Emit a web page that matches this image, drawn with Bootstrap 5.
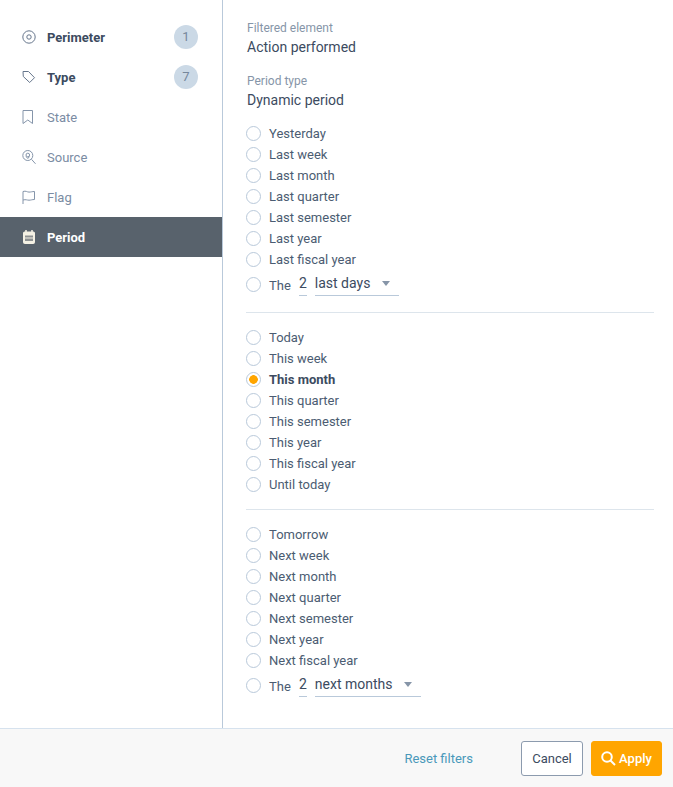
<!DOCTYPE html>
<html lang="en">
<head>
<meta charset="utf-8">
<title>Filters</title>
<link rel="stylesheet" href="https://cdn.jsdelivr.net/npm/bootstrap@5.3.0/dist/css/bootstrap.min.css">
<style>
html,body{height:787px;overflow:hidden}
body{font-family:Roboto,"Liberation Sans",sans-serif;font-size:13px;color:#3c4b5f;background:#fff}
.shell{height:787px}
.upper{height:728px;min-height:0}
.side{width:223px;flex:none;border-right:1px solid #b9c9da;padding-top:17px}
.side-item{height:40px;padding:0 24px 0 22px;color:#7b8ca3;gap:10px}
.side-item>span:not(.count){padding-top:1px}
.side-item svg{width:15px;height:16px;flex:none;fill:none;stroke:#8595aa;stroke-width:1}
.side-item.on{color:#3c4b5f;font-weight:700}
.side-item.on svg{stroke:#66768c}
.side-item.cur{background:#58626c;color:#fff;font-weight:700}
.count{width:24px;height:24px;border-radius:50%;background:#cbd9e6;color:#76879b;font-weight:400;font-size:13px}
.main{padding:21px 19px 0 23px;min-width:0}
.cap{font-size:12px;color:#8695a8;line-height:14px;margin-left:1px}
.val{font-size:14px;line-height:18px;margin-top:3px;margin-left:1px;color:#3c4b5f}
.block{margin-bottom:18px}
.block.last{margin-bottom:14px}
.opt{min-height:0;height:21px;margin:0;padding:0;gap:8px}
.opt .form-check-input{width:15px;height:15px;margin:0;float:none;flex:none;border:1px solid #b9c9da;background-image:none;background-color:#fff}
.opt .form-check-input:checked{border-color:#b9c9da;background:#fff radial-gradient(circle,#ffa500 0,#ffa500 4px,transparent 4.6px)}
.opt label{color:#4b5c72;line-height:21px}
.opt.sel label{font-weight:700;color:#3c4b5f}
.opt.inl{height:29px;align-items:center}
.opt.inl label{margin-top:1px}
.num{font-size:14px;color:#3c4b5f;border-bottom:1px solid #b9c9da;width:8px;box-sizing:content-box;line-height:20px;padding-bottom:2px;text-align:center}
.pick{font-size:14px;color:#3c4b5f;border-bottom:1px solid #b9c9da;line-height:20px;padding-bottom:2px;padding-right:9px}
.pick i{display:inline-block;border:4px solid transparent;border-top:5px solid #8695a8;border-bottom:0;vertical-align:2px;margin-left:12px}
.rule{margin:0;border:0;border-top:1px solid #dde5ec;opacity:1}
.r1{margin-bottom:14px;margin-top:13px}
.r2{margin-bottom:14px;margin-top:14px}
.foot{height:59px;background:#f8f8f8;border-top:1px solid #d6e2ee;padding:0 11px 0 0}
.reset{color:#4a98ba;text-decoration:none;margin-right:48px;padding-top:1px}
.btn-cancel{width:62px;height:35px;padding:1px 0 0;font-size:13px;background:#fff;color:#3c4b5f;border:1px solid #8c9bae;border-radius:3px;margin-right:8px}
.btn-apply{width:71px;height:35px;padding:1px 0 0;font-size:13px;background:#ffa500;color:#fff;border:1px solid #ffa500;border-radius:3px;font-weight:500;gap:3px}
.btn-apply:hover{background:#ffa500;color:#fff}
.btn-apply svg{width:15px;height:15px;fill:none;stroke:#fff;stroke-width:2}
</style>
</head>
<body>
<div class="shell d-flex flex-column">
  <div class="upper d-flex">
    <nav class="side">
      <div class="side-item on d-flex align-items-center">
        <svg viewBox="0 0 15 16"><circle cx="7" cy="8" r="6.200"/><circle cx="7" cy="8" r="2.200"/></svg>
        <span class="flex-grow-1">Perimeter</span><span class="count d-flex align-items-center justify-content-center">1</span>
      </div>
      <div class="side-item on d-flex align-items-center">
        <svg viewBox="0 0 15 16"><path d="M1 2.500h5.500l6 6.200-4.800 4.800L1.300 7.500z" stroke-linejoin="round"/></svg>
        <span class="flex-grow-1">Type</span><span class="count d-flex align-items-center justify-content-center">7</span>
      </div>
      <div class="side-item d-flex align-items-center">
        <svg viewBox="0 0 15 16"><path d="M1 1.500h9.500v13L5.800 11 1 14.500z" stroke-linejoin="round"/></svg>
        <span>State</span>
      </div>
      <div class="side-item d-flex align-items-center">
        <svg viewBox="0 0 15 16"><circle cx="5.800" cy="6.500" r="5"/><circle cx="5.800" cy="6" r="1.800"/><path d="M5.800 9.500 4 7.500M5.800 9.500l1.800-2M9.500 10.300l4 4.500"/></svg>
        <span>Source</span>
      </div>
      <div class="side-item d-flex align-items-center">
        <svg viewBox="0 0 15 16"><path d="M1 15V2.500c3-1 4 .6 6 .6s3-.6 5.500-.6v8c-2.500 0-3.500.7-5.500.7s-3-1-6-.2"/></svg>
        <span>Flag</span>
      </div>
      <div class="side-item cur d-flex align-items-center">
        <svg viewBox="0 0 15 16"><rect x="1.500" y="3" width="11" height="11.500" rx="1" fill="#f4f1e4" stroke="#f4f1e4"/><path d="M4 1v3M10 1v3" stroke="#f4f1e4" stroke-width="1.500"/><rect x="3" y="6.500" width="8" height="5.500" fill="#8d9192" stroke="none"/><path d="M3 9h8" stroke="#f4f1e4"/></svg>
        <span>Period</span>
      </div>
    </nav>
    <main class="main flex-grow-1">
      <div class="block">
        <div class="cap">Filtered element</div>
        <div class="val">Action performed</div>
      </div>
      <div class="block last">
        <div class="cap">Period type</div>
        <div class="val">Dynamic period</div>
      </div>

      <div class="form-check opt d-flex align-items-center"><input class="form-check-input" type="radio" name="p" id="a1"><label for="a1">Yesterday</label></div>
      <div class="form-check opt d-flex align-items-center"><input class="form-check-input" type="radio" name="p" id="a2"><label for="a2">Last week</label></div>
      <div class="form-check opt d-flex align-items-center"><input class="form-check-input" type="radio" name="p" id="a3"><label for="a3">Last month</label></div>
      <div class="form-check opt d-flex align-items-center"><input class="form-check-input" type="radio" name="p" id="a4"><label for="a4">Last quarter</label></div>
      <div class="form-check opt d-flex align-items-center"><input class="form-check-input" type="radio" name="p" id="a5"><label for="a5">Last semester</label></div>
      <div class="form-check opt d-flex align-items-center"><input class="form-check-input" type="radio" name="p" id="a6"><label for="a6">Last year</label></div>
      <div class="form-check opt d-flex align-items-center"><input class="form-check-input" type="radio" name="p" id="a7"><label for="a7">Last fiscal year</label></div>
      <div class="form-check opt inl d-flex"><input class="form-check-input" type="radio" name="p" id="a8"><label for="a8">The</label><span class="num">2</span><span class="pick">last days<i></i></span></div>
      <hr class="rule r1">

      <div class="form-check opt d-flex align-items-center"><input class="form-check-input" type="radio" name="p" id="b1"><label for="b1">Today</label></div>
      <div class="form-check opt d-flex align-items-center"><input class="form-check-input" type="radio" name="p" id="b2"><label for="b2">This week</label></div>
      <div class="form-check opt sel d-flex align-items-center"><input class="form-check-input" type="radio" name="p" id="b3" checked><label for="b3">This month</label></div>
      <div class="form-check opt d-flex align-items-center"><input class="form-check-input" type="radio" name="p" id="b4"><label for="b4">This quarter</label></div>
      <div class="form-check opt d-flex align-items-center"><input class="form-check-input" type="radio" name="p" id="b5"><label for="b5">This semester</label></div>
      <div class="form-check opt d-flex align-items-center"><input class="form-check-input" type="radio" name="p" id="b6"><label for="b6">This year</label></div>
      <div class="form-check opt d-flex align-items-center"><input class="form-check-input" type="radio" name="p" id="b7"><label for="b7">This fiscal year</label></div>
      <div class="form-check opt d-flex align-items-center"><input class="form-check-input" type="radio" name="p" id="b8"><label for="b8">Until today</label></div>
      <hr class="rule r2">

      <div class="form-check opt d-flex align-items-center"><input class="form-check-input" type="radio" name="p" id="c1"><label for="c1">Tomorrow</label></div>
      <div class="form-check opt d-flex align-items-center"><input class="form-check-input" type="radio" name="p" id="c2"><label for="c2">Next week</label></div>
      <div class="form-check opt d-flex align-items-center"><input class="form-check-input" type="radio" name="p" id="c3"><label for="c3">Next month</label></div>
      <div class="form-check opt d-flex align-items-center"><input class="form-check-input" type="radio" name="p" id="c4"><label for="c4">Next quarter</label></div>
      <div class="form-check opt d-flex align-items-center"><input class="form-check-input" type="radio" name="p" id="c5"><label for="c5">Next semester</label></div>
      <div class="form-check opt d-flex align-items-center"><input class="form-check-input" type="radio" name="p" id="c6"><label for="c6">Next year</label></div>
      <div class="form-check opt d-flex align-items-center"><input class="form-check-input" type="radio" name="p" id="c7"><label for="c7">Next fiscal year</label></div>
      <div class="form-check opt inl d-flex"><input class="form-check-input" type="radio" name="p" id="c8"><label for="c8">The</label><span class="num">2</span><span class="pick">next months<i></i></span></div>
    </main>
  </div>
  <footer class="foot d-flex align-items-center justify-content-end">
    <a class="reset" href="#">Reset filters</a>
    <button type="button" class="btn btn-cancel">Cancel</button>
    <button type="button" class="btn btn-apply d-inline-flex align-items-center justify-content-center">
      <svg viewBox="0 0 15 15"><circle cx="6" cy="6" r="4.800"/><path d="M9.500 9.500l4.500 4.500"/></svg>Apply
    </button>
  </footer>
</div>
<script src="https://cdn.jsdelivr.net/npm/bootstrap@5.3.0/dist/js/bootstrap.bundle.min.js"></script>
</body>
</html>
